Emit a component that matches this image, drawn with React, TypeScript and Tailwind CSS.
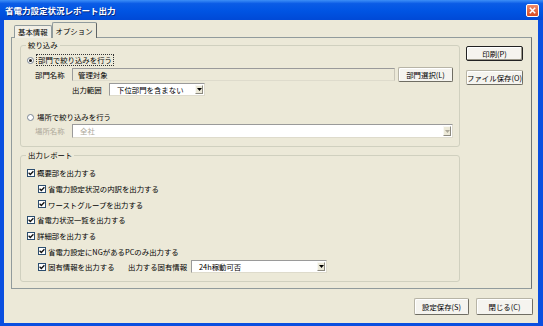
import React from "react";

const BG = "bg-[#ece9d8]";

function Radio({ checked = false }: { checked?: boolean }) {
  return (
    <span className="w-[7px] h-[7px] shrink-0 rounded-full border border-[#7a8594] bg-white flex items-center justify-center">
      {checked && <span className="w-[3px] h-[3px] rounded-full bg-[#1a1a1a]" />}
    </span>
  );
}

function Check() {
  return (
    <span className="w-[8px] h-[8px] shrink-0 border border-[#2c4d6e] bg-white flex items-center justify-center">
      <svg width="6" height="6" viewBox="0 0 6 6">
        <path d="M0.6 2.8 L2.3 4.5 L5.4 1.2" fill="none" stroke="#111" strokeWidth="1.3" />
      </svg>
    </span>
  );
}

function Combo({
  text,
  width,
  height = "h-[13px]",
  disabled = false,
}: {
  text: string;
  width: string;
  height?: string;
  disabled?: boolean;
}) {
  return (
    <div
      className={`${width} ${height} shrink-0 flex items-stretch border border-[#9a9a9a] border-b-[#dedbcc] border-r-[#dedbcc] bg-white`}
    >
      <div className={`flex-1 flex items-center pl-[7px] ${disabled ? "text-[#aca899]" : ""}`}>
        {text}
      </div>
      <div className="w-[8px] m-[1px] flex items-center justify-center bg-[#ece9d8] border border-[#f8f8f4] border-b-[#8c8a80] border-r-[#8c8a80]">
        <svg width="5" height="3" viewBox="0 0 5 3">
          <path d="M0 0 H5 L2.5 3 Z" fill={disabled ? "#aca899" : "#000"} />
        </svg>
      </div>
    </div>
  );
}

function Button({
  label,
  width,
  primary = false,
}: {
  label: string;
  width: string;
  primary?: boolean;
}) {
  return (
    <div
      className={`${width} h-full flex items-center justify-center rounded-[2px] bg-[#f5f4ef] ${
        primary
          ? "border border-[#222] shadow-[inset_-1px_-1px_0_#9b988a,inset_1px_1px_0_#fff]"
          : "border border-[#b7b4a6] border-b-[#6f6d63] border-r-[#6f6d63] shadow-[inset_1px_1px_0_#fff]"
      }`}
    >
      {label}
    </div>
  );
}

function Group({
  title,
  className,
  children,
}: {
  title: string;
  className: string;
  children: React.ReactNode;
}) {
  return (
    <div className={`relative w-[440px] border border-[#d0d0bf] rounded-[3px] ${className}`}>
      <span className={`absolute -top-[5px] left-[5px] px-[2px] ${BG}`}>{title}</span>
      {children}
    </div>
  );
}

function CheckRow({ label, indent = false }: { label: string; indent?: boolean }) {
  return (
    <div className={`h-[15.7px] flex items-center gap-[2px] ${indent ? "pl-[17px]" : "pl-[6px]"}`}>
      <Check />
      <span>{label}</span>
    </div>
  );
}

export default function App() {
  return (
    <div className="w-[543px] h-[326px] flex flex-col bg-[#0a4fe0] overflow-hidden font-['Noto_Sans_CJK_JP',sans-serif] text-[7.4px] leading-none text-black">
      {/* title bar */}
      <div className="h-[20px] shrink-0 flex items-center pl-[5px] pr-[4px] bg-[linear-gradient(to_bottom,#3d8ff7_0%,#0b5ce6_18%,#0054e3_55%,#0049d6_100%)]">
        <span className="flex-1 text-white font-bold text-[8.5px] [text-shadow:1px_1px_0_#0a2a80]">
          省電力設定状況レポート出力
        </span>
        <div className="w-[13px] h-[13px] rounded-[2px] border border-white bg-[linear-gradient(to_bottom,#ef8a6a,#d84a22)] flex items-center justify-center">
          <svg width="7" height="7" viewBox="0 0 7 7">
            <path d="M0.8 0.8 L6.2 6.2 M6.2 0.8 L0.8 6.2" stroke="#fff" strokeWidth="1.5" />
          </svg>
        </div>
      </div>

      {/* client area */}
      <div className={`flex-1 min-h-0 ml-[4px] mr-[5px] mb-[3px] ${BG} flex flex-col`}>
        {/* tabs */}
        <div className="mt-[2px] h-[16px] -mb-[1px] pl-[10px] flex items-end relative z-10">
          <div className="h-[13px] px-[3px] flex items-center border border-b-0 border-[#919b9c] rounded-t-[2px] bg-[#f1efe6]">
            基本情報
          </div>
          <div className={`h-[16px] px-[3px] flex items-center border border-b-0 border-[#919b9c] border-r-[#5f6566] rounded-t-[2px] ${BG}`}>
            オプション
          </div>
        </div>

        {/* tab page */}
        <div className="h-[252px] ml-[7px] mr-[6px] border border-[#919b9c] border-r-[#6c7273] flex pl-[8px] pt-[7px]">
          <div className="flex flex-col">
            <Group title="絞り込み" className="h-[102px] pt-[9px] pl-[6px]">
              <div className="h-[10px] flex items-center gap-[2px]">
                <Radio checked />
                <span className="border border-dotted border-[#333] px-[1px] py-[1px]">
                  部門で絞り込みを行う
                </span>
              </div>
              <div className="mt-[2px] h-[15px] flex items-center pl-[8px]">
                <span className="w-[37px]">部門名称</span>
                <div className="w-[323px] h-[13px] flex items-center pl-[5px] border border-[#9a9a9a] border-b-[#dedbcc] border-r-[#c9c6b8]">
                  管理対象
                </div>
                <div className="ml-[3px] h-[15px]">
                  <Button label="部門選択(L)" width="w-[55px]" />
                </div>
              </div>
              <div className="mt-[1px] h-[13px] flex items-center pl-[45px]">
                <span className="w-[37px]">出力範囲</span>
                <Combo text="下位部門を含まない" width="w-[96px]" />
              </div>
              <div className="mt-[16px] h-[10px] flex items-center gap-[3px]">
                <Radio />
                <span>場所で絞り込みを行う</span>
              </div>
              <div className="mt-[2px] h-[14px] flex items-center pl-[8px]">
                <span className="w-[37px] text-[#aca899]">場所名称</span>
                <Combo text="全社" width="w-[381px]" height="h-[14px]" disabled />
              </div>
            </Group>

            <Group title="出力レポート" className="mt-[8px] h-[127px] pt-[9px]">
              <CheckRow label="概要部を出力する" />
              <CheckRow label="省電力設定状況の内訳を出力する" indent />
              <CheckRow label="ワーストグループを出力する" indent />
              <CheckRow label="省電力状況一覧を出力する" />
              <CheckRow label="詳細部を出力する" />
              <CheckRow label="省電力設定にNGがあるPCのみ出力する" indent />
              <div className="h-[15.7px] flex items-center pl-[17px]">
                <div className="w-[90px] flex items-center gap-[2px]">
                  <Check />
                  <span>固有情報を出力する</span>
                </div>
                <span className="w-[63px]">出力する固有情報</span>
                <Combo text="24h稼動可否" width="w-[136px]" />
              </div>
            </Group>
          </div>

          <div className="ml-[6px] flex flex-col">
            <div className="mt-[1px] h-[15px]">
              <Button label="印刷(P)" width="w-[57px]" primary />
            </div>
            <div className="mt-[9px] h-[15px]">
              <Button label="ファイル保存(O)" width="w-[57px]" />
            </div>
          </div>
        </div>

        {/* bottom buttons */}
        <div className="mt-[9px] h-[17px] flex justify-end gap-[7px] pr-[5px]">
          <Button label="設定保存(S)" width="w-[55px]" />
          <Button label="閉じる(C)" width="w-[57px]" />
        </div>
      </div>
    </div>
  );
}
